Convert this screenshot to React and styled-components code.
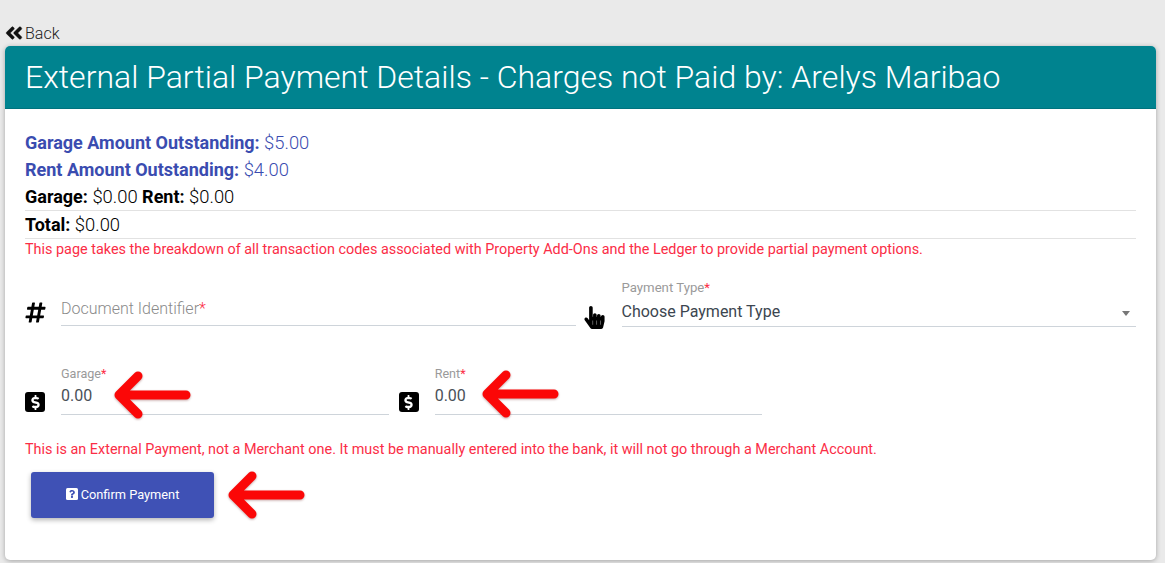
import React from "react";
import styled, { createGlobalStyle } from "styled-components";
import { FaAngleDoubleLeft, FaHashtag, FaDollarSign, FaHandPointer, FaQuestion } from "react-icons/fa";

const GlobalStyle = createGlobalStyle`
   html, body {
      margin: 0;
      height: 563px;
      overflow: hidden;
      background: #eaeaea;
      font-family: "Roboto", sans-serif;
   }
`;

const RedArrow = ({ className }) => (
   <ArrowSvg className={className} width="82" height="50" viewBox="0 0 82 50" fill="none">
      <path
         d="M25 6 L6 25 L25 44 M6 25 H73"
         stroke="#fb0707"
         strokeWidth="9"
         strokeLinecap="round"
         strokeLinejoin="round"
      />
   </ArrowSvg>
);

export default function App() {
   return (
      <Page>
         <GlobalStyle />
         <BackLink>
            <FaAngleDoubleLeft size={20} />
            <span>Back</span>
         </BackLink>
         <Card>
            <CardHeader>External Partial Payment Details - Charges not Paid by: Arelys Maribao</CardHeader>
            <CardBody>
               <SummaryLine $accent>
                  <b>Garage Amount Outstanding:</b> $5.00
               </SummaryLine>
               <SummaryLine $accent>
                  <b>Rent Amount Outstanding:</b> $4.00
               </SummaryLine>
               <SummaryLine>
                  <b>Garage:</b> $0.00 <b>Rent:</b> $0.00
               </SummaryLine>
               <TotalLine>
                  <b>Total:</b> $0.00
               </TotalLine>
               <Notice>
                  This page takes the breakdown of all transaction codes associated with Property Add-Ons and the Ledger to provide partial payment options.
               </Notice>

               <TopRow>
                  <FieldGroup>
                     <HashIcon><FaHashtag size={23} /></HashIcon>
                     <Field $lift>
                        <Placeholder>Document Identifier<Star>*</Star></Placeholder>
                     </Field>
                  </FieldGroup>
                  <FieldGroup>
                     <HandIcon><FaHandPointer size={23} /></HandIcon>
                     <Field>
                        <SelectLabel>Payment Type<Star>*</Star></SelectLabel>
                        <SelectValue>Choose Payment Type</SelectValue>
                        <Caret />
                     </Field>
                  </FieldGroup>
               </TopRow>

               <AmountRow>
                  <FieldGroup>
                     <DollarIcon><FaDollarSign size={15} /></DollarIcon>
                     <Field>
                        <SmallLabel>Garage<Star>*</Star></SmallLabel>
                        <AmountInput defaultValue="0.00" />
                        <FieldArrow $left={52} $top={5} />
                     </Field>
                  </FieldGroup>
                  <FieldGroup>
                     <DollarIcon><FaDollarSign size={15} /></DollarIcon>
                     <Field>
                        <SmallLabel>Rent<Star>*</Star></SmallLabel>
                        <AmountInput defaultValue="0.00" />
                        <FieldArrow $left={46} $top={4} />
                     </Field>
                  </FieldGroup>
               </AmountRow>

               <BottomNotice>
                  This is an External Payment, not a Merchant one. It must be manually entered into the bank, it will not go through a Merchant Account.
               </BottomNotice>

               <ActionRow>
                  <ConfirmButton>
                     <QuestionBox><FaQuestion size={8} /></QuestionBox>
                     Confirm Payment
                  </ConfirmButton>
                  <RedArrow />
               </ActionRow>
            </CardBody>
         </Card>
      </Page>
   );
}

// CSS styles

const Page = styled.div`
   padding: 22px 9px 0 5px;
`;

const ArrowSvg = styled.svg`
   filter: drop-shadow(0 1px 1px rgba(90, 0, 0, 0.35));
`;

const BackLink = styled.a`
   display: flex;
   align-items: center;
   gap: 1px;
   height: 22px;
   padding-bottom: 2px;
   color: #212121;
   font-size: 16px;
   font-weight: 300;
   svg {
      color: #111;
      margin-left: -1px;
      stroke-width: 12;
   }
`;

const Card = styled.section`
   height: 514px;
   background: #fff;
   border-radius: 5px;
   box-shadow: 0 1px 5px rgba(0, 0, 0, 0.3);
   overflow: hidden;
`;

const CardHeader = styled.header`
   height: 63px;
   box-sizing: border-box;
   padding: 0 20px 1px 20px;
   display: flex;
   align-items: center;
   background: #00838f;
   border-bottom: 1px solid #00737e;
   color: #fff;
   font-size: 32px;
   font-weight: 300;
   white-space: nowrap;
`;

const CardBody = styled.div`
   padding: 20px 20px 0 20px;
`;

const SummaryLine = styled.div`
   height: 27px;
   line-height: 27px;
   font-size: 18.4px;
   font-weight: 300;
   color: ${(p) => (p.$accent ? "#3a4cb0" : "#000")};
   b {
      font-size: 18px;
      font-weight: 700;
   }
`;

const TotalLine = styled(SummaryLine)`
   border-top: 1px solid #e2e2e2;
   border-bottom: 1px solid #e2e2e2;
`;

const Notice = styled.p`
   margin: 2px 0 0 0;
   font-size: 14.4px;
   line-height: 17px;
   color: #fb2d46;
`;

const BottomNotice = styled(Notice)`
   margin-top: 26px;
`;

const TopRow = styled.div`
   display: flex;
   gap: 10px;
   margin-top: 22px;
`;

const AmountRow = styled.div`
   display: grid;
   grid-template-columns: repeat(3, 1fr);
   gap: 10px;
   margin-top: 38px;
`;

const FieldGroup = styled.div`
   flex: 1;
   display: flex;
   align-items: flex-end;
`;

const HashIcon = styled.span`
   flex: 0 0 36px;
   display: flex;
   height: 23px;
   margin: 0 0 3px 0;
   color: #000;
   svg {
      margin-left: -1.5px;
   }
`;

const HandIcon = styled.span`
   flex: 0 0 36px;
   display: flex;
   height: 23px;
   margin-bottom: -2px;
   color: #000;
   svg {
      margin-left: -2.5px;
   }
`;

const DollarIcon = styled.span`
   flex: 0 0 auto;
   width: 20px;
   height: 20px;
   margin: 0 16px 3px 0;
   display: flex;
   align-items: center;
   justify-content: center;
   background: #000;
   border-radius: 3px;
   color: #fff;
`;

const Field = styled.div`
   position: relative;
   flex: 1;
   min-width: 0;
   margin-bottom: ${(p) => (p.$lift ? "1px" : "0")};
   border-bottom: 1px solid #ced4da;
`;

const SmallLabel = styled.label`
   display: block;
   height: 17px;
   line-height: 17px;
   font-size: 12.6px;
   font-weight: 400;
   color: #9a9a9a;
`;

const SelectLabel = styled(SmallLabel)`
   line-height: 15px;
   font-size: 13.2px;
`;

const Placeholder = styled.div`
   height: 34px;
   line-height: 36px;
   font-size: 16px;
   font-weight: 300;
   color: #8a8a8a;
`;

const Star = styled.span`
   color: #fb2d46;
`;

const SelectValue = styled.div`
   height: 29px;
   line-height: 29px;
   font-size: 16px;
   color: #3c4650;
`;

const Caret = styled.i`
   position: absolute;
   right: 6px;
   bottom: 10px;
   border-left: 4.5px solid transparent;
   border-right: 4.5px solid transparent;
   border-top: 5px solid #777;
`;

const AmountInput = styled.input`
   display: block;
   width: 100%;
   box-sizing: border-box;
   height: 32px;
   padding: 0 0 5px 0;
   border: none;
   outline: none;
   background: transparent;
   font-family: inherit;
   font-size: 16px;
   color: #495057;
`;

const FieldArrow = styled(RedArrow)`
   position: absolute;
   left: ${(p) => p.$left}px;
   top: ${(p) => p.$top}px;
`;

const ActionRow = styled.div`
   display: flex;
   align-items: center;
   gap: 13px;
   margin: 12px 0 0 6px;
`;

const ConfirmButton = styled.button`
   width: 183px;
   height: 46px;
   padding: 0 0 2px 0;
   display: flex;
   align-items: center;
   justify-content: center;
   gap: 3px;
   border: none;
   border-radius: 3px;
   background: #3f51b5;
   box-shadow: 0 2px 5px rgba(0, 0, 0, 0.3);
   color: #fff;
   font-family: inherit;
   font-size: 12.8px;
   font-weight: 400;
`;

const QuestionBox = styled.span`
   width: 12px;
   height: 12px;
   display: flex;
   align-items: center;
   justify-content: center;
   background: #fff;
   border-radius: 1.5px;
   color: #3f51b5;
`;
